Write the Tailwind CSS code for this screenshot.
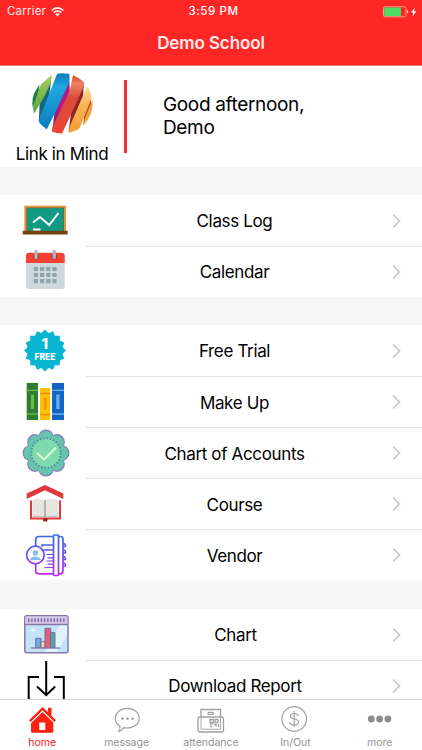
<!DOCTYPE html>
<html lang="en">
<head>
    <meta charset="UTF-8">
    <meta name="viewport" content="width=device-width, initial-scale=1.0">
    <title>Demo School</title>
    <script src="https://cdn.jsdelivr.net/npm/@tailwindcss/browser@4"></script>
</head>
<body class="h-[750px] overflow-hidden bg-white font-[Inter,'Liberation_Sans',sans-serif] text-black">
    <div class="flex h-full flex-col">
        <!-- Header -->
        <header class="h-[66px] shrink-0 border-b border-[#f97474] bg-[#ff2626] text-white">
            <div class="grid h-[22px] grid-cols-3 items-center pt-px pr-[5px] pl-[7px] text-[11.5px]">
                <div class="flex items-center gap-[5px]">
                    <span class="tracking-[0.2px] text-white/90">Carrier</span>
                    <svg class="h-[10px] w-[13px]" viewBox="0 0 13 10" fill="none" stroke="white" stroke-width="1.6">
                        <path d="M.7 3.5Q6.5-1.6 12.3 3.5M2.7 5.7Q6.500 2.300 10.300 5.700"/>
                        <path d="M4.300 7.300Q6.500 5.400 8.700 7.300L6.500 9.500z" fill="white" stroke="none"/>
                    </svg>
                </div>
                <span class="pl-[3px] text-center font-medium tracking-[0.6px]">3:59 PM</span>
                <div class="flex justify-end">
                    <svg class="h-[12px] w-[34px]" viewBox="0 0 34 12">
                        <rect x=".5" y=".8" width="22.500" height="10" rx="1.500" fill="none" stroke="#ff9d8d"/>
                        <rect x="1.200" y="1.500" width="16.800" height="8.600" fill="#4cd964"/>
                        <path d="M23.800 4v3.600q1.500-.4 1.500-1.800T23.800 4z" fill="#ffc8c0"/>
                        <path d="M32 1.200l-4 5.300h2.300l-1 4.300 4-5.500H31z" fill="white"/>
                    </svg>
                </div>
            </div>
            <h1 class="text-center text-[17px] leading-[43px] font-semibold tracking-[-0.1px] text-white/90">Demo School</h1>
        </header>

        <!-- Greeting -->
        <section class="flex h-[101px] shrink-0">
            <div class="flex w-[124px] flex-col items-center pt-[7px]">
                <svg class="size-[61px] shrink-0" viewBox="0 0 182 182">
                    <defs>
                        <clipPath id="ball"><circle cx="91" cy="91" r="90"/></clipPath>
                        <linearGradient id="lime" x2="0" y2="1"><stop stop-color="#a5cf5d"/><stop offset="1" stop-color="#55a23b"/></linearGradient>
                        <linearGradient id="sky" x2="0" y2="1"><stop stop-color="#0879bb"/><stop offset=".25" stop-color="#20a8df"/><stop offset="1" stop-color="#0a79bf"/></linearGradient>
                        <linearGradient id="coral" x2="0" y2="1"><stop stop-color="#cc392d"/><stop offset=".15" stop-color="#f08165"/><stop offset=".4" stop-color="#d94a38"/><stop offset="1" stop-color="#ef4437"/></linearGradient>
                        <linearGradient id="amber" x2="0" y2="1"><stop stop-color="#ffe0a0"/><stop offset=".4" stop-color="#fbb455"/><stop offset="1" stop-color="#f29b30"/></linearGradient>
                        <linearGradient id="plum" x2="0" y2="1"><stop stop-color="#872d88"/><stop offset=".5" stop-color="#bd1789"/><stop offset="1" stop-color="#4b2776"/></linearGradient>
                    </defs>
                    <g clip-path="url(#ball)">
                        <path d="M0 70L22 34 20 62 5 98 0 105z" fill="#17803f"/>
                        <path d="M57 20L52 62 20 150 23 88z" fill="#126879"/>
                        <path d="M26 34L60 5 56 28 38 68 2 128 4 98z" fill="url(#lime)"/>
                        <path d="M111 8L113 55 60 178 68 110z" fill="url(#plum)"/>
                        <path d="M76 0L112 0 110 30 70 116 42 172 19 157 22 135z" fill="url(#sky)"/>
                        <path d="M155 22L152 80 109 176 118 105z" fill="#8f2526"/>
                        <path d="M123 4L157 20 154 42 118 120 88 184 58 182 62 158 112 55z" fill="url(#coral)"/>
                        <path d="M176 62L176 98 153 158 157 105z" fill="#b2501c"/>
                        <path d="M165 38L179 60 176 78 137 178 108 186 112 160z" fill="url(#amber)"/>
                        <path d="M182 76V125L153 160 156 140z" fill="#f3a443"/>
                    </g>
                </svg>
                <p class="text-[17px] leading-[40px] tracking-[-0.35px]">Link in Mind</p>
            </div>
            <div class="mt-[14px] h-[73px] w-[3px] bg-[#ee3038]"></div>
            <p class="mt-[27px] ml-[36px] text-[19px] leading-[23px] tracking-[-0.35px]">Good afternoon,<br>Demo</p>
        </section>

        <!-- Menu -->
        <main class="min-h-0 flex-1 overflow-hidden bg-[#f6f6f6] pt-[28px] text-[17px] tracking-[-0.35px]">
            <section class="bg-white">
                <div class="flex h-[51px]">
                    <svg class="ml-5 size-[50px]" viewBox="0 0 50 50">
                        <rect x="4.300" y="10.700" width="41.700" height="26" fill="#e5963c"/>
                        <rect x="6.300" y="12.500" width="37.700" height="23.500" fill="#8a5c2c"/>
                        <rect x="7" y="13.200" width="36.300" height="23" fill="#119981"/>
                        <path d="M13 27.500l7-5.500 9.200 8 9.300-12" fill="none" stroke="white" stroke-width="2"/>
                        <path d="M13 33.500h7.500v2.200H13z" fill="white"/>
                        <rect x="2.700" y="35.700" width="45" height="3.800" rx=".7" fill="#74400e"/>
                    </svg>
                    <div class="ml-[15px] flex flex-1 items-center">
                        <span class="w-[299px] pt-[3px] text-center">Class Log</span>
                        <svg class="ml-[7px] h-[16px] w-[11px]" viewBox="0 0 11 16" fill="none" stroke="#c7c7cc" stroke-width="1.700"><path d="M2 1.500L8.500 8 2 14.500"/></svg>
                    </div>
                </div>
                <div class="flex h-[51px]">
                    <svg class="ml-5 size-[50px]" viewBox="0 0 50 50">
                        <rect x="6" y="7" width="38.700" height="36" rx="3" fill="#cfd8dc"/>
                        <path d="M6 17V10q0-3.300 3.300-3.300h32q3.400 0 3.400 3.300v7z" fill="#f44336"/>
                        <g fill="#b3322b"><circle cx="16" cy="10.500" r="3"/><circle cx="34.200" cy="10.500" r="3"/></g>
                        <path d="M16 5.500v6M34.200 5.500v6" stroke="#a9b7be" stroke-width="3.300" stroke-linecap="round"/>
                        <path d="M13.800 23h22.800M13.800 29h22.800M13.800 35.200h22.800" stroke="#90a4ae" stroke-width="4.200" stroke-dasharray="4.200 2"/>
                    </svg>
                    <div class="ml-[15px] flex flex-1 items-center border-t border-[#e2e2e4]">
                        <span class="w-[299px] pt-[2px] text-center">Calendar</span>
                        <svg class="ml-[7px] h-[16px] w-[11px]" viewBox="0 0 11 16" fill="none" stroke="#c7c7cc" stroke-width="1.700"><path d="M2 1.500L8.500 8 2 14.500"/></svg>
                    </div>
                </div>
            </section>

            <section class="mt-[28px] bg-white">
                <div class="flex h-[51px]">
                    <svg class="ml-5 size-[50px]" viewBox="0 0 50 50">
                        <g transform="translate(25 25.500)" fill="#08b5d1">
                            <rect x="-14.800" y="-14.800" width="29.600" height="29.600"/>
                            <rect x="-14.800" y="-14.800" width="29.600" height="29.600" transform="rotate(22.500)"/>
                            <rect x="-14.800" y="-14.800" width="29.600" height="29.600" transform="rotate(45)"/>
                            <rect x="-14.800" y="-14.800" width="29.600" height="29.600" transform="rotate(67.500)"/>
                        </g>
                        <g fill="white" font-weight="800" text-anchor="middle" letter-spacing="0">
                            <text x="24.800" y="24" font-size="15">1</text>
                            <text x="25" y="35.300" font-size="8.500" textLength="21" lengthAdjust="spacingAndGlyphs">FREE</text>
                        </g>
                    </svg>
                    <div class="ml-[15px] flex flex-1 items-center">
                        <span class="w-[299px] pt-[3px] text-center">Free Trial</span>
                        <svg class="ml-[7px] h-[16px] w-[11px]" viewBox="0 0 11 16" fill="none" stroke="#c7c7cc" stroke-width="1.700"><path d="M2 1.500L8.500 8 2 14.500"/></svg>
                    </div>
                </div>
                <div class="flex h-[51px]">
                    <svg class="ml-5 size-[50px]" viewBox="0 0 50 50">
                        <path d="M6.700 7H18v37H6.700z" fill="#2e7d32"/>
                        <path d="M6.700 14.300H18M6.700 38H18" stroke="#66bb4a" stroke-width="1.300"/>
                        <path d="M11 18.500h3v14.500h-3z" fill="#6abf45"/>
                        <path d="M20 12h10.300v32H20z" fill="#ffc107"/>
                        <path d="M20 17.500h10.300M20 38.500h10.300" stroke="#fb8c00" stroke-width="1.300"/>
                        <path d="M23.800 21.500h3v12h-3z" fill="#fb9a00"/>
                        <path d="M32 7h12v37H32z" fill="#1565c0"/>
                        <path d="M32 14.300h12M32 38h12" stroke="#64b5f6" stroke-width="1.300"/>
                        <path d="M36.300 18.500h3.200v14.500h-3.200z" fill="#64b5f6"/>
                    </svg>
                    <div class="ml-[15px] flex flex-1 items-center border-t border-[#e2e2e4]">
                        <span class="w-[299px] pt-[3px] text-center">Make Up</span>
                        <svg class="ml-[7px] h-[16px] w-[11px]" viewBox="0 0 11 16" fill="none" stroke="#c7c7cc" stroke-width="1.700"><path d="M2 1.500L8.500 8 2 14.500"/></svg>
                    </div>
                </div>
                <div class="flex h-[51px]">
                    <svg class="ml-5 size-[50px]" viewBox="0 0 50 50">
                        <defs>
                            <g id="scallop">
                                <circle r="19"/>
                                <circle cy="-15.700" r="7.800"/><circle cy="15.700" r="7.800"/><circle cx="-15.700" r="7.800"/><circle cx="15.700" r="7.800"/>
                                <circle cx="11.100" cy="-11.100" r="7.800"/><circle cx="11.100" cy="11.100" r="7.800"/><circle cx="-11.100" cy="-11.100" r="7.800"/><circle cx="-11.100" cy="11.100" r="7.800"/>
                            </g>
                        </defs>
                        <g transform="translate(26 26)">
                            <use href="#scallop" fill="#887db5"/>
                            <use href="#scallop" fill="#66c6ad" transform="scale(.94)"/>
                            <circle r="14.800" fill="#7ddbaf" stroke="#5b84a0" stroke-width="2" stroke-dasharray="1.500 1.820"/>
                        </g>
                        <path d="M17 26l7 6.500L36 20.500" fill="none" stroke="#e3f7d4" stroke-width="2"/>
                    </svg>
                    <div class="ml-[15px] flex flex-1 items-center border-t border-[#e2e2e4]">
                        <span class="w-[299px] pt-[3px] text-center">Chart of Accounts</span>
                        <svg class="ml-[7px] h-[16px] w-[11px]" viewBox="0 0 11 16" fill="none" stroke="#c7c7cc" stroke-width="1.700"><path d="M2 1.500L8.500 8 2 14.500"/></svg>
                    </div>
                </div>
                <div class="flex h-[51px]">
                    <svg class="ml-5 size-[50px]" viewBox="0 0 50 50">
                        <path d="M25 7l18.300 8.500V21L25 12.200 6.700 21v-5.500z" fill="#e0383b"/>
                        <path d="M11 22.500v18h29v-18" fill="none" stroke="#e0383b" stroke-width="2"/>
                        <path d="M12.500 22q8-2.500 12.500.5 4.500-3 13-.5v17q-8-1.500-13 .5-5-2-12.500-.5z" fill="#e8e4e2"/>
                        <path d="M25 22v17.500" stroke="#8b7772"/>
                        <path d="M13 38.600q7.500-1 12 1 4.500-2 12.500-1" fill="none" stroke="#a89b96" stroke-width=".7"/>
                        <path d="M22.500 40.500h5.500l-1 3h-3.500z" fill="#a92325"/>
                    </svg>
                    <div class="ml-[15px] flex flex-1 items-center border-t border-[#e2e2e4]">
                        <span class="w-[299px] pt-[3px] text-center">Course</span>
                        <svg class="ml-[7px] h-[16px] w-[11px]" viewBox="0 0 11 16" fill="none" stroke="#c7c7cc" stroke-width="1.700"><path d="M2 1.500L8.500 8 2 14.500"/></svg>
                    </div>
                </div>
                <div class="flex h-[51px]">
                    <svg class="ml-5 size-[50px]" viewBox="0 0 50 50" fill="none" stroke="url(#ink)" stroke-width="1.700">
                        <defs><linearGradient id="ink" gradientUnits="userSpaceOnUse" x1="0" y1="5" x2="0" y2="47"><stop stop-color="#2e6ee6"/><stop offset=".5" stop-color="#6d4df2"/><stop offset="1" stop-color="#c329ec"/></linearGradient></defs>
                        <path d="M33.500 7.500H19q-3.300 0-3.300 3.300v31q0 3 3.300 3h14.500M38.500 7.500h2q2.500 0 2.500 3v31q0 3.300-2.500 3.300h-2"/>
                        <rect x="33.500" y="6" width="5" height="40.500" rx="1" fill="white"/>
                        <path d="M22 18v-2h11.500M22.500 21h11" stroke-width="1.500"/>
                        <path d="M26.500 25.500h7M27.500 28.800h6M26.500 32h7M27.500 35.200h6M24.500 38.500h9" stroke-width="1.200"/>
                        <path d="M43 14.500q3 0 2.500 3h-2.500M43 21q3 0 2.500 3h-2.500M43 27.500q3 0 2.500 3h-2.500M43 34q3 0 2.500 3h-2.500" stroke-width="1.400"/>
                        <circle cx="15.400" cy="26" r="8.800" fill="white"/>
                        <g fill="#8bbcf2" stroke="none"><circle cx="15.400" cy="24" r="2.800"/><path d="M10 31q.5-3.500 5.400-3.500T21 31z"/></g>
                    </svg>
                    <div class="ml-[15px] flex flex-1 items-center border-t border-[#e2e2e4]">
                        <span class="w-[299px] pt-[3px] text-center">Vendor</span>
                        <svg class="ml-[7px] h-[16px] w-[11px]" viewBox="0 0 11 16" fill="none" stroke="#c7c7cc" stroke-width="1.700"><path d="M2 1.500L8.500 8 2 14.500"/></svg>
                    </div>
                </div>
            </section>

            <section class="mt-[29px] bg-white">
                <div class="flex h-[51px]">
                    <svg class="ml-5 size-[50px]" viewBox="0 0 50 50">
                        <rect x="4.800" y="6.800" width="43.200" height="37" rx="2" fill="#c2e4f8" stroke="#8b75ad" stroke-width="1.500"/>
                        <path d="M25 43L40 16h7v10L37 43z" fill="#e1f3fd"/>
                        <path d="M5.500 7.500h41.800V15H5.500z" fill="#d8c8ea"/>
                        <path d="M4.800 15.500H48" stroke="#8b75ad" stroke-width="1.300"/>
                        <path d="M8 11.300h38" stroke="#77639b" stroke-width="3.600" stroke-dasharray="1.400 1.800"/>
                        <path d="M13 18.500l.8 2 2 .8-2 .8-.8 2-.8-2-2-.8 2-.8z" fill="white"/>
                        <g stroke="#75608f" stroke-width=".9">
                            <path d="M15.700 29.300H21v9.400h-5.300z" fill="#6cabe6"/>
                            <path d="M21 32.700h4v6h-4z" fill="#f8dd99"/>
                            <path d="M25 19.300h5.700v19.400H25z" fill="#e35d83"/>
                            <path d="M30.700 23.700H35v15h-4.300z" fill="#51aa9b"/>
                        </g>
                        <path d="M10.700 39H40" stroke="#8b75ad" stroke-width="1.300"/>
                    </svg>
                    <div class="ml-[15px] flex flex-1 items-center">
                        <span class="w-[301px] pt-[3px] text-center">Chart</span>
                        <svg class="ml-[5px] h-[16px] w-[11px]" viewBox="0 0 11 16" fill="none" stroke="#c7c7cc" stroke-width="1.700"><path d="M2 1.500L8.500 8 2 14.500"/></svg>
                    </div>
                </div>
                <div class="flex h-[51px]">
                    <svg class="ml-5 size-[50px]" viewBox="0 0 50 50" fill="none" stroke="black" stroke-width="2">
                        <path d="M26.200 1v34M17 26.500l9.200 8.700 9-8.700M19 17H8.700v33M34 17h9.800v33"/>
                    </svg>
                    <div class="ml-[15px] flex flex-1 items-center border-t border-[#e2e2e4]">
                        <span class="w-[300px] pt-px text-center">Download Report</span>
                        <svg class="ml-[6px] h-[16px] w-[11px]" viewBox="0 0 11 16" fill="none" stroke="#c7c7cc" stroke-width="1.700"><path d="M2 1.500L8.500 8 2 14.500"/></svg>
                    </div>
                </div>
            </section>
        </main>

        <!-- Tab bar -->
        <nav class="grid h-[51px] shrink-0 grid-cols-5 border-t border-[#d5d5d7] bg-white text-[10.5px] text-[#929292]">
            <a class="flex flex-col items-center pt-[5px] text-[#f5201a]">
                <svg class="size-[30px] shrink-0" viewBox="0 0 30 30" fill="#ff2010">
                    <path d="M15.500 2L21 7.300V2.700h3.500v8l4.500 4.500-1.600 1.700L15.500 5.300 3.700 16.900 2 15.200z"/>
                    <path d="M15.500 7l10.800 10.500v8.700q0 1.500-1.500 1.500H5.500Q4 27.700 4 26.200v-8z"/>
                    <path d="M12.300 17.500h6v7.500h-6z" fill="white"/>
                </svg>
                <span class="leading-[16px]">home</span>
            </a>
            <a class="flex flex-col items-center pt-[5px]">
                <svg class="size-[30px] shrink-0" viewBox="0 0 30 30" fill="none" stroke="#a0a0a0" stroke-width="1.200">
                    <path d="M6.800 26.300q1.800-2 1.200-5Q3.300 18.300 3.300 13.700C3.300 7.500 8.500 3.300 15.300 3.300S27.200 7.500 27.200 13.300 22 23 15 23q-1.700 0-3-.4-2 3-5.200 3.700z"/>
                    <g fill="#929292" stroke="none"><circle cx="10.500" cy="13.600" r="1.200"/><circle cx="15.500" cy="13.600" r="1.200"/><circle cx="20.500" cy="13.600" r="1.200"/></g>
                </svg>
                <span class="leading-[16px]">message</span>
            </a>
            <a class="flex flex-col items-center pt-[5px]">
                <svg class="size-[30px] shrink-0" viewBox="0 0 30 30" fill="none" stroke="#a0a0a0" stroke-width="1.300">
                    <path d="M5 12V4.500h19.500V12"/>
                    <rect x="2" y="12" width="25.500" height="15" rx="1.800"/>
                    <path d="M5 12.500v11.700h19.500V12.500" stroke-width=".9"/>
                    <rect x="12" y="7.300" width="5.500" height="2" rx="1"/>
                    <path d="M14 14.500h3.300v3H14zM19 14.500h3v3h-3zM14 19.200h3M18 19.500h2v2M22.500 19v3M14 21.500h2.200"/>
                </svg>
                <span class="leading-[16px]">attendance</span>
            </a>
            <a class="flex flex-col items-center pt-[5px]">
                <svg class="size-[30px] shrink-0" viewBox="0 0 30 30" fill="none" stroke="#a0a0a0" stroke-width="1.200">
                    <circle cx="14.200" cy="14" r="12.300"/>
                    <path d="M18.300 11q-.6-2.500-4.100-2.500-3.700 0-3.700 2.700 0 2 3.700 2.800 4.400.8 4.400 3.200 0 2.800-4.400 2.800-4 0-4.400-2.900M14.200 6v15.800"/>
                </svg>
                <span class="leading-[16px]">In/Out</span>
            </a>
            <a class="flex flex-col items-center pt-[5px]">
                <svg class="size-[30px] shrink-0" viewBox="0 0 30 30" fill="#8c8c8c">
                    <circle cx="6.300" cy="14" r="3.400"/><circle cx="14.600" cy="14" r="3.400"/><circle cx="22.900" cy="14" r="3.400"/>
                </svg>
                <span class="leading-[16px]">more</span>
            </a>
        </nav>
    </div>
</body>
</html>
